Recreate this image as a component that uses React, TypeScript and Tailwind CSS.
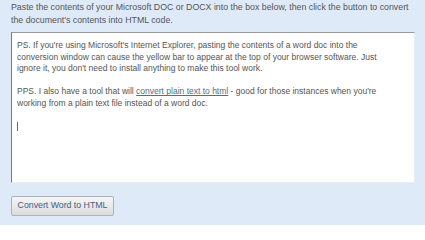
import React from "react";

export default function App() {
  const font = { fontFamily: '"Liberation Sans", Arial, sans-serif' };
  return (
    <div className="w-[425px] h-[225px] bg-[#deeaf8] overflow-hidden" style={font}>
      <div className="pl-[11px] pr-[10px] pt-[1px]">
        <p className="text-[8.8px] leading-[13px] text-[#555555] m-0 whitespace-nowrap">
          Paste the contents of your Microsoft DOC or DOCX into the box below, then click the button to convert
          <br />
          the document's contents into HTML code.
        </p>
        <div className="mt-[5px] w-[404px] h-[151px] bg-white border border-t-[#9a9a9a] border-l-[#7a7a7a] border-r-[#e8eef6] border-b-[#e8eef6] pl-[5px] pt-[7px] text-[8.5px] leading-[11.6px] text-[#555555] whitespace-nowrap">
          <div>PS. If you're using Microsoft's Internet Explorer, pasting the contents of a word doc into the</div>
          <div>conversion window can cause the yellow bar to appear at the top of your browser software. Just</div>
          <div>ignore it, you don't need to install anything to make this tool work.</div>
          <div>&nbsp;</div>
          <div>
            PPS. I also have a tool that will{" "}
            <a href="#" className="text-[#4a6f9a] underline">convert plain text to html</a> - good for those instances when you're
          </div>
          <div>working from a plain text file instead of a word doc.</div>
          <div>&nbsp;</div>
          <div className="flex items-center h-[11.6px]">
            <span className="inline-block w-px h-[9px] bg-[#666]" />
          </div>
        </div>
        <button className="mt-[13px] w-[103px] h-[20px] border border-[#aeb2b8] rounded-[2px] bg-gradient-to-b from-[#f6f6f6] to-[#dcdcdc] text-[8.75px] text-[#3d6188] flex items-center justify-center" style={font}>
          Convert Word to HTML
        </button>
      </div>
    </div>
  );
}
